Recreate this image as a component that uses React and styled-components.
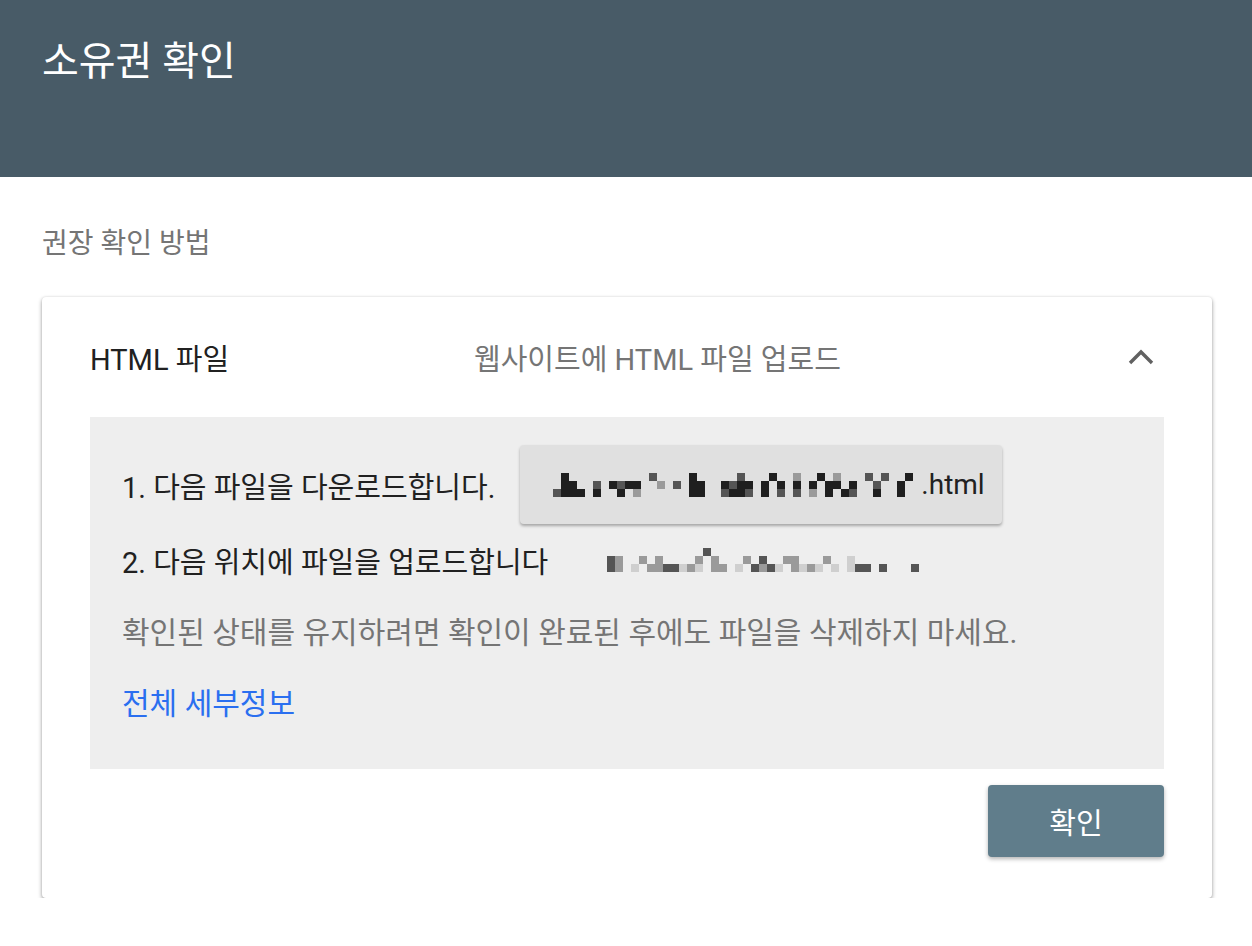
import React from 'react';
import styled, { createGlobalStyle } from 'styled-components';

const GlobalStyle = createGlobalStyle`
  body {
    margin: 0;
    background: #ffffff;
    font-family: Roboto, "Noto Sans CJK KR", sans-serif;
  }
`;

const fileBlob = [
  '   1          2    1     2   1  3  1 3   2 2  1 ',
  '   11  2 1211  3 2 11  1211 1 1 1 1 11 1  2  1 ',
  '  2111 1  1 3      11  2112 1 2 2 3 1 12  1  1 ',
];

const pathBlob = [
  '            2                          ',
  '23  3 3    3 3   3 2  33   3  4        ',
  '23 4 3322434 33 4 2324 3434 4 422 2   2',
];

const shades = { '1': '#1f1f1f', '2': '#555555', '3': '#9a9a9a', '4': '#cfcfcf' };

const Pixelated = ({ rows, size = 8 }) => {
  const width = Math.max(...rows.map((r) => r.length)) * size;
  return (
    <svg width={width} height={rows.length * size} aria-hidden="true">
      {rows.map((row, y) =>
        row.split('').map((ch, x) =>
          shades[ch] ? (
            <rect key={`${x}-${y}`} x={x * size} y={y * size} width={size} height={size} fill={shades[ch]} />
          ) : null
        )
      )}
    </svg>
  );
};

const ChevronUp = () => (
  <svg width="28" height="18" viewBox="0 0 28 18" aria-hidden="true">
    <polyline points="3,15 14,4 25,15" fill="none" stroke="#616161" strokeWidth="3.4" />
  </svg>
);

const App = () => {
  return (
    <>
      <GlobalStyle />
      <Header>
        <Title>소유권 확인</Title>
      </Header>
      <Main>
        <SectionLabel>권장 확인 방법</SectionLabel>
        <Card>
          <CardHead>
            <MethodName>HTML 파일</MethodName>
            <MethodDesc>웹사이트에 HTML 파일 업로드</MethodDesc>
            <Toggle>
              <ChevronUp />
            </Toggle>
          </CardHead>
          <Panel>
            <Step $height={79}>
              <span>1. 다음 파일을 다운로드합니다.</span>
              <FileChip>
                <Pixelated rows={fileBlob} />
                <span>.html</span>
              </FileChip>
            </Step>
            <Step $height={72}>
              <span>2. 다음 위치에 파일을 업로드합니다</span>
              <PathBlob>
                <Pixelated rows={pathBlob} />
              </PathBlob>
            </Step>
            <Note>확인된 상태를 유지하려면 확인이 완료된 후에도 파일을 삭제하지 마세요.</Note>
            <DetailsLink href="#">전체 세부정보</DetailsLink>
          </Panel>
          <Actions>
            <VerifyButton>확인</VerifyButton>
          </Actions>
        </Card>
      </Main>
    </>
  );
};

const Header = styled.header`
  height: 177px;
  background: #485b67;
  padding: 36px 42px 0;
  box-sizing: border-box;
`;

const Title = styled.h1`
  margin: 0;
  color: #ffffff;
  font-size: 40px;
  font-weight: 400;
  line-height: 52px;
`;

const Main = styled.main`
  padding: 49px 40px 0 42px;
`;

const SectionLabel = styled.div`
  color: #757575;
  font-size: 28px;
  line-height: 36px;
  margin-bottom: 35px;
`;

const Card = styled.section`
  background: #ffffff;
  border-radius: 4px;
  box-shadow: 0 2px 4px rgba(0, 0, 0, 0.38), 0 0 2px rgba(0, 0, 0, 0.1);
  padding: 0 48px 41px;
`;

const CardHead = styled.div`
  display: flex;
  align-items: center;
  height: 120px;
`;

const MethodName = styled.div`
  width: 384px;
  font-size: 29px;
  color: #212121;
`;

const MethodDesc = styled.div`
  flex: 1;
  font-size: 29px;
  color: #757575;
`;

const Toggle = styled.div`
  display: flex;
  margin-right: 9px;
`;

const Panel = styled.div`
  background: #eeeeee;
  padding: 28px 32px 45px;
  display: flex;
  flex-direction: column;
`;

const Step = styled.div`
  display: flex;
  align-items: center;
  gap: 25px;
  height: ${({ $height }) => $height}px;
  font-size: 29px;
  color: #212121;
`;

const FileChip = styled.div`
  display: flex;
  align-items: center;
  height: 79px;
  padding: 0 17px 0 17px;
  background: #e0e0e0;
  border-radius: 4px;
  box-shadow: 0 2px 3px rgba(0, 0, 0, 0.3);
  font-size: 28px;
  color: #212121;
`;

const PathBlob = styled.div`
  display: flex;
  margin-left: 34px;
`;

const Note = styled.p`
  margin: 17px 0 0;
  font-size: 30px;
  line-height: 40px;
  color: #757575;
`;

const DetailsLink = styled.a`
  margin-top: 31px;
  font-size: 30px;
  line-height: 40px;
  color: #2a6ff0;
  text-decoration: none;
  align-self: flex-start;
`;

const Actions = styled.div`
  display: flex;
  justify-content: flex-end;
  padding-top: 16px;
`;

const VerifyButton = styled.button`
  width: 176px;
  height: 72px;
  border: none;
  border-radius: 4px;
  background: #607d8b;
  color: #ffffff;
  font-family: Roboto, "Noto Sans CJK KR", sans-serif;
  font-size: 29px;
  box-shadow: 0 2px 4px rgba(0, 0, 0, 0.3);
  cursor: pointer;
`;

export default App;
